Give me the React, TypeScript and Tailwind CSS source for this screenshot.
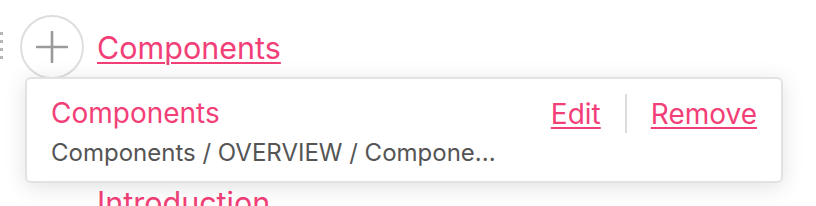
import React from "react";

export default function App() {
  const pink = "text-[#f23f78]";
  return (
    <div className="relative w-[816px] h-[206px] overflow-hidden bg-white font-['Inter','Liberation_Sans',sans-serif]">
      <div className="flex items-start pt-[15px]">
        <div className="flex flex-col gap-[5px] pt-[17px] w-[20px]">
          <span className="block w-[3px] h-[3px] bg-[#b5b5b5]" />
          <span className="block w-[3px] h-[3px] bg-[#b5b5b5]" />
          <span className="block w-[3px] h-[3px] bg-[#b5b5b5]" />
          <span className="block w-[3px] h-[3px] bg-[#b5b5b5]" />
        </div>
        <div className="flex h-[64px] w-[64px] shrink-0 items-center justify-center rounded-full border-2 border-[#dedede] bg-white">
          <svg width="32" height="32" viewBox="0 0 32 32">
            <path d="M16 1v30M1 16h30" stroke="#9a9a9a" strokeWidth="2.6" strokeLinecap="round" />
          </svg>
        </div>
        <a className={`ml-[13px] mt-[15px] text-[30.5px] leading-[36px] ${pink} underline decoration-2 underline-offset-[3px]`}>
          Components
        </a>
      </div>
      <div className={`pl-[97px] mt-[106px] text-[30.5px] leading-[36px] ${pink}`}>Introduction</div>

      <div className="absolute left-[25px] top-[77px] flex h-[106px] w-[758px] flex-col rounded-[6px] border-2 border-[#e2e2e2] bg-white pl-[24px] pr-[24px] shadow-[0_4px_22px_rgba(0,0,0,0.12)]">
        <div className="flex items-start justify-between pt-[17px]">
          <div className={`text-[28px] leading-[34px] ${pink}`}>Components</div>
          <div className="flex items-start">
            <a className={`mt-[1px] text-[28px] leading-[34px] ${pink} underline decoration-2 underline-offset-[3px]`}>Edit</a>
            <div className="mx-[24px] -mt-[2px] h-[39px] w-[2px] bg-[#dcdcdc]" />
            <a className={`mt-[1px] text-[28px] leading-[34px] ${pink} underline decoration-2 underline-offset-[3px]`}>Remove</a>
          </div>
        </div>
        <div className="mt-[6px] text-[24px] leading-[28px] text-[#555555]">Components / OVERVIEW / Compone...</div>
      </div>
    </div>
  );
}
